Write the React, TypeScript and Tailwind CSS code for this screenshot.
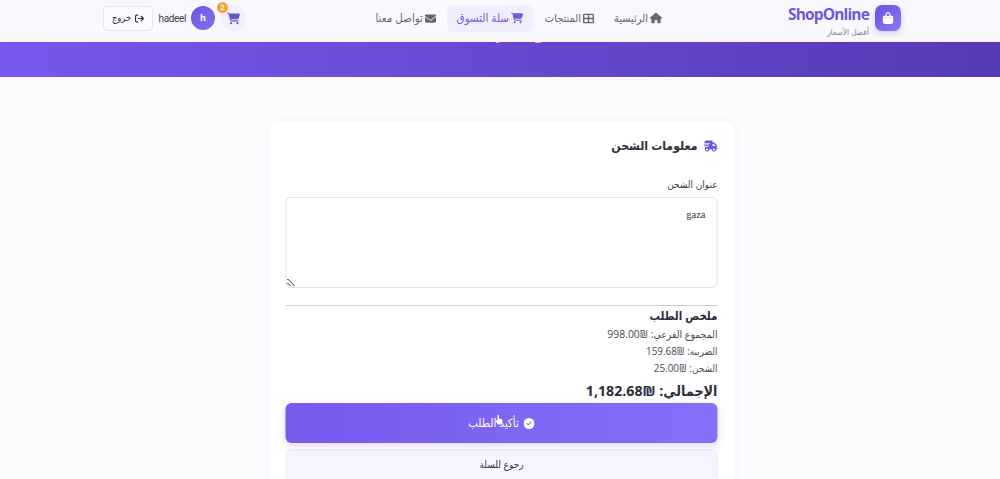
import type { ReactNode } from 'react'
import clsx from 'clsx'
import {
  FaArrowRightFromBracket,
  FaBagShopping,
  FaCartShopping,
  FaCircleCheck,
  FaEnvelope,
  FaHouse,
  FaTableCellsLarge,
  FaTruckFast,
} from 'react-icons/fa6'

type NavItem = {
  title: string
  icon: ReactNode
  className: string
  active?: boolean
}

const menu: NavItem[] = [
  { title: 'الرئيسية', icon: <FaHouse className="size-3 shrink-0" />, className: 'w-[48px] text-[11px]' },
  {
    title: 'المنتجات',
    icon: <FaTableCellsLarge className="size-[11px] shrink-0" />,
    className: 'ms-[20px] w-[50px] text-[11px]',
  },
  {
    title: 'سلة التسوق',
    icon: <FaCartShopping className="size-3 shrink-0" />,
    className: 'ms-[11px] w-[86px] px-[10px] text-[11.5px]',
    active: true,
  },
  {
    title: 'تواصل معنا',
    icon: <FaEnvelope className="size-[11px] shrink-0" />,
    className: 'ms-[11px] w-[62px] text-[11.5px]',
  },
]

const summary = [
  { label: 'المجموع الفرعي', value: '₪998.00', className: 'text-[10.4px]' },
  { label: 'الضريبة', value: '₪159.68', className: 'text-[9.9px]' },
  { label: 'الشحن', value: '₪25.00', className: 'text-[9.9px]' },
]

const Header = () => (
  <header className="relative z-10 h-[42px] bg-[#f9f8fe]">
    <div className="mx-auto flex h-9 w-[798px] translate-x-[2px] items-center">
      <div className="flex w-[114px] gap-[6px]">
        <div className="flex size-[26px] shrink-0 items-center justify-center rounded-[7px] bg-gradient-to-br from-[#6a52dc] to-[#8b76fb] text-white shadow-[0_3px_6px_#6c5ce740]">
          <FaBagShopping className="size-3" />
        </div>
        <div className="relative h-[26px]">
          <p
            className="text-[15.5px] leading-[19px] font-bold tracking-[-0.85px] text-[#7059d8]"
            dir="ltr"
          >
            ShopOnline
          </p>
          <p className="absolute top-[21px] right-0 text-[8.3px] leading-[11px] whitespace-nowrap text-[#85858f]">أفضل الأسعار</p>
        </div>
      </div>

      <nav className="ms-[125px] flex items-center">
        {menu.map(({ title, icon, className, active }) => (
          <a
            key={title}
            className={clsx(
              'flex h-[27px] items-center gap-[2px] rounded-[6px] whitespace-nowrap',
              active ? 'bg-[#f0edfd] text-[#705bd6]' : 'text-[#67676e]',
              className,
            )}
          >
            {icon}
            <span>{title}</span>
          </a>
        ))}
      </nav>

      <div className="ms-auto flex items-center">
        <div className="relative flex size-[26px] items-center justify-center rounded-full bg-[#f3f0fe] text-[#6855c8]">
          <FaCartShopping className="size-[13px]" />
          <span className="absolute -top-[3px] -left-[3px] flex size-[11px] items-center justify-center rounded-full bg-[#efa63c] text-[7px] leading-none font-bold text-white">
            2
          </span>
        </div>
        <div className="ms-[5px] flex size-6 items-center justify-center rounded-full bg-gradient-to-br from-[#6d56dc] to-[#8570f6] text-[9px] font-bold text-white">
          h
        </div>
        <span className="ms-[5px] w-[27px] font-[Roboto] text-[10px] tracking-[-0.35px] text-[#3c3b4a]">hadeel</span>
        <button className="ms-[6px] flex h-[25px] w-[50px] items-center justify-center gap-[4px] rounded-[5px] border border-[#e6e4ef] bg-[#fbfafe] text-[9.5px] text-[#33323f]">
          <FaArrowRightFromBracket className="size-[9px]" />
          <span>خروج</span>
        </button>
      </div>
    </div>
  </header>
)

const Checkout = () => (
  <section className="mx-auto mt-[44px] h-[400px] w-[466px] translate-x-[1.5px] rounded-[12px] bg-white px-[17px] pt-[15px] shadow-[0_0_6px_#6c5ce714]">
    <h2 className="flex h-5 items-center gap-[6px] text-[12.2px] font-bold text-[#30303c]">
      <FaTruckFast className="size-[14px] text-[#6d58dc]" />
      معلومات الشحن
    </h2>
    <label className="mt-[21px] block text-[10px] leading-[14px] text-[#3b3a46]">عنوان الشحن</label>
    <textarea
      className="mt-[6px] block h-[91px] w-full resize rounded-[5px] border border-[#e2e2e5] px-[11px] py-[9px] font-['Liberation_Serif',serif] text-[10.5px] leading-[15px] text-[#3b3a46]"
      defaultValue="gaza"
    />
    <hr className="mt-[17px] border-[#d0d0cc]" />

    <h3 className="mt-[1px] text-[11.5px] leading-[18px] font-bold text-[#2e2d3b]">ملخص الطلب</h3>
    <div className="pt-px">
      {summary.map(({ label, value, className }) => (
        <p key={label} className={clsx('leading-[17px] text-[#4a4956]', className)}>
          {label}: {value}
        </p>
      ))}
    </div>
    <p className="mt-[2px] mb-[1px] text-[14.2px] leading-[23px] font-bold text-[#2e2d3b]">الإجمالي: ₪1,182.68</p>

    <button className="relative flex h-10 w-full items-center justify-center gap-[5px] rounded-[6px] bg-gradient-to-r from-[#7759ec] to-[#8570fa] text-[11.5px] text-white shadow-[0_3px_8px_#6c5ce738]">
      <FaCircleCheck className="size-[11px]" />
      <span>تأكيد الطلب</span>
      <svg className="absolute top-[11px] left-[209px] h-[12px] w-[9px]" viewBox="0 0 9 12" fill="white">
        <path d="M3 1.2Q3.8.2 4.5 1.2V4.4L7.5 5.2Q8.3 6 7.7 8L6.8 10.5H3.5L.8 6.8Q1.3 5.6 3 6.5Z" />
      </svg>
    </button>
    <button className="mt-[6px] flex h-10 w-full items-start justify-center rounded-[6px] border border-[#eeebf8] bg-[#f6f4fe] pt-[7px] text-[10px] leading-[15px] text-[#33323f]">
      رجوع للسلة
    </button>
  </section>
)

const App = () => (
  <div
    dir="rtl"
    className="h-[479px] overflow-hidden bg-[#fcfcfe] font-['Open_Sans','DejaVu_Sans_Condensed','DejaVu_Sans',sans-serif]"
  >
    <Header />
    <div className="relative h-[35px] overflow-hidden bg-gradient-to-r from-[#7858ed] to-[#563ab5]">
      <span className="absolute top-0 left-[496px] h-px w-[3px] bg-[#c9bdf5]" />
      <span className="absolute top-0 left-[535px] h-px w-[6px] bg-[#c9bdf5]" />
    </div>
    <Checkout />
  </div>
)

export default App
